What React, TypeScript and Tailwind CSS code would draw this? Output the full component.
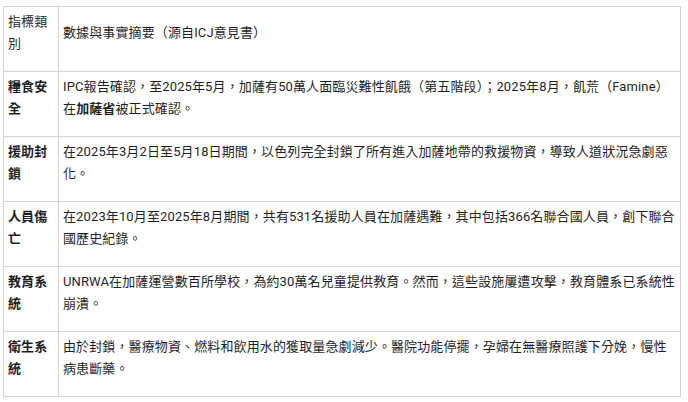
const ROWS: { label: string; body: React.ReactNode }[] = [
  {
    label: "糧食安全",
    body: (
      <>
        IPC報告確認，至2025年5月，加薩有50萬人面臨災難性飢餓（第五階段）；2025年8月，飢荒（Famine）在
        <strong className="font-bold">加薩省</strong>被正式確認。
      </>
    ),
  },
  {
    label: "援助封鎖",
    body: "在2025年3月2日至5月18日期間，以色列完全封鎖了所有進入加薩地帶的救援物資，導致人道狀況急劇惡化。",
  },
  {
    label: "人員傷亡",
    body: "在2023年10月至2025年8月期間，共有531名援助人員在加薩遇難，其中包括366名聯合國人員，創下聯合國歷史紀錄。",
  },
  {
    label: "教育系統",
    body: "UNRWA在加薩運營數百所學校，為約30萬名兒童提供教育。然而，這些設施屢遭攻擊，教育體系已系統性崩潰。",
  },
  {
    label: "衛生系統",
    body: "由於封鎖，醫療物資、燃料和飲用水的獲取量急劇減少。醫院功能停擺，孕婦在無醫療照護下分娩，慢性病患斷藥。",
  },
];

const cell = "border border-[#d3d3d3] align-middle pl-[4px] pr-[4px] pt-[4px] pb-[16px] leading-[22px]";

export default function App() {
  return (
    <div
      className="bg-white min-h-[402px] pt-[6px] pl-[3px] text-[13px] tracking-[0.12px] text-[#1f1f1f]"
      style={{ fontFamily: 'Roboto, "Noto Sans CJK TC", sans-serif' }}
    >
      <table className="w-[678px] border-collapse">
        <colgroup>
          <col className="w-[55px]" />
          <col />
        </colgroup>
        <thead>
          <tr>
            <th className={`${cell} text-left font-normal`}>指標類別</th>
            <th className={`${cell} text-left font-normal`}>數據與事實摘要（源自ICJ意見書）</th>
          </tr>
        </thead>
        <tbody>
          {ROWS.map((r) => (
            <tr key={r.label}>
              <td className={`${cell} font-bold`}>{r.label}</td>
              <td className={cell}>{r.body}</td>
            </tr>
          ))}
        </tbody>
      </table>
    </div>
  );
}
